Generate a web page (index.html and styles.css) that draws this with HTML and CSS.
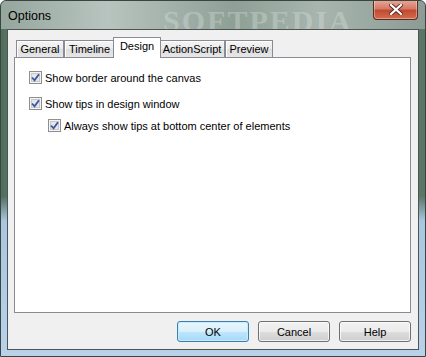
FILE: index.html
```html
<!DOCTYPE html>
<html lang="en">
<head>
  <meta charset="UTF-8">
  <meta name="viewport" content="width=device-width, initial-scale=1.0">
  <title>Options</title>
  <link rel="stylesheet" href="styles.css">
</head>
<body>
  <div class="window">
    <!-- title bar -->
    <div class="titlebar">
      <span class="title">Options</span>
      <span class="watermark">SOFTPEDIA</span>
      <div class="close">
        <svg width="14" height="11" viewBox="0 0 14 11">
          <path d="M2 1 L12 10 M12 1 L2 10" stroke="#5a2a22" stroke-width="4" stroke-linecap="square"/>
          <path d="M2 1 L12 10 M12 1 L2 10" stroke="#ffffff" stroke-width="2.2" stroke-linecap="square"/>
        </svg>
      </div>
    </div>

    <div class="client">
      <!-- tabs -->
      <div class="tabs">
        <div class="tab t_general">General</div>
        <div class="tab t_timeline">Timeline</div>
        <div class="tab active t_design">Design</div>
        <div class="tab t_action">ActionScript</div>
        <div class="tab t_preview">Preview</div>
      </div>

      <div class="panel">
        <div class="row">
          <svg class="chk" width="13" height="13" viewBox="0 0 13 13">
            <rect x="0.5" y="0.5" width="12" height="12" fill="#f4f4f4" stroke="#8e8f8f"/>
            <rect x="2.5" y="2.5" width="8" height="8" fill="#e6e6e6" stroke="#c9c9c9"/>
            <path d="M3 6.5 L5.5 9.3 L10 3.2" fill="none" stroke="#3b56a3" stroke-width="1.8"/>
          </svg>
          <span>Show border around the canvas</span>
        </div>
        <div class="row">
          <svg class="chk" width="13" height="13" viewBox="0 0 13 13">
            <rect x="0.5" y="0.5" width="12" height="12" fill="#f4f4f4" stroke="#8e8f8f"/>
            <rect x="2.5" y="2.5" width="8" height="8" fill="#e6e6e6" stroke="#c9c9c9"/>
            <path d="M3 6.5 L5.5 9.3 L10 3.2" fill="none" stroke="#3b56a3" stroke-width="1.8"/>
          </svg>
          <span>Show tips in design window</span>
        </div>
        <div class="row sub">
          <svg class="chk" width="13" height="13" viewBox="0 0 13 13">
            <rect x="0.5" y="0.5" width="12" height="12" fill="#f4f4f4" stroke="#8e8f8f"/>
            <rect x="2.5" y="2.5" width="8" height="8" fill="#e6e6e6" stroke="#c9c9c9"/>
            <path d="M3 6.5 L5.5 9.3 L10 3.2" fill="none" stroke="#3b56a3" stroke-width="1.8"/>
          </svg>
          <span>Always show tips at bottom center of elements</span>
        </div>
      </div>

      <!-- dialog buttons -->
      <div class="buttons">
        <div class="btn default">OK</div>
        <div class="btn">Cancel</div>
        <div class="btn">Help</div>
      </div>
    </div>
  </div>
</body>
</html>
```

FILE: styles.css
```css
* {
  box-sizing: border-box;
  margin: 0;
}
body {
  width: 426px;
  height: 357px;
  overflow: hidden;
  font-family: "Liberation Sans", Arial, sans-serif;
  font-size: 11px;
  color: #000;
}

.window {
  width: 426px;
  height: 357px;
  display: flex;
  flex-direction: column;
  border: 1px solid #3a4540;
  border-radius: 6px 6px 0 0;
  background:
    linear-gradient(180deg, rgba(150,170,160,0) 0%, rgba(150,170,160,0) 55%, #a9c6e0 62%, #b8d2ea 100%),
    linear-gradient(90deg, #4f6d5d 0%, #9fb0a8 20%, #8a9f95 45%, #b2c0ba 65%, #718a7e 85%, #587565 100%);
  overflow: hidden;
}

.titlebar {
  height: 28px;
  display: flex;
  align-items: flex-start;
  padding-left: 7px;
  background: linear-gradient(90deg, #95a69e 0%, #b8c4bf 25%, #8ea096 55%, #a7b5ae 75%, #8c9c94 100%);
}
.title {
  padding-top: 8px;
  font-size: 12.5px;
  color: #000;
}
.watermark {
  flex: 1;
  padding: 3px 0 0 112px;
  font-family: "Liberation Serif", serif;
  font-weight: bold;
  font-size: 30px;
  letter-spacing: 2px;
  color: rgba(235, 240, 238, 0.28);
  white-space: nowrap;
  overflow: hidden;
}
.close {
  width: 45px;
  height: 20px;
  margin-right: 7px;
  margin-top: -1px;
  display: flex;
  align-items: center;
  justify-content: center;
  border: 1px solid #5b2a22;
  border-top: none;
  border-radius: 0 0 4px 4px;
  background: linear-gradient(180deg, #e9a99a 0%, #d77a67 45%, #c04a32 55%, #d46c4c 100%);
  box-shadow: inset 0 0 0 1px rgba(255,255,255,0.35);
}

.client {
  flex: 1;
  margin: 0 6px 6px 6px;
  display: flex;
  flex-direction: column;
  background: #f0f0f0;
  border: 1px solid #4c5554;
}

.tabs {
  display: flex;
  align-items: flex-end;
  height: 27px;
  padding-left: 8px;
}
.tab {
  height: 17px;
  padding-top: 2px;
  text-align: center;
  border: 1px solid #898c95;
  border-bottom: none;
  background: linear-gradient(180deg, #f4f4f4 0%, #ebebeb 50%, #dedede 51%, #e6e6e6 100%);
  box-shadow: inset 1px 1px 0 #fff;
}
.t_general { width: 48px; }
.t_timeline { width: 51px; }
.t_design { width: 48px; }
.t_action { width: 66px; }
.t_preview { width: 48px; }
.tab.active {
  height: 21px;
  margin: 0 -2px -1px -2px;
  padding-top: 2px;
  background: #fff;
  box-shadow: none;
  position: relative;
  z-index: 1;
}

.panel {
  flex: 1;
  margin: 0 7px 0 6px;
  background: #fff;
  border: 1px solid #898c95;
  padding: 13px 0 0 14px;
}
.row {
  display: flex;
  align-items: center;
  height: 13px;
  margin-bottom: 13px;
  white-space: nowrap;
}
.row.sub {
  margin-top: -4px;
  padding-left: 19px;
}
.chk {
  flex: none;
  margin-right: 3px;
}

.buttons {
  display: flex;
  justify-content: flex-end;
  gap: 9px;
  padding: 8px 7px 7px 0;
}
.btn {
  width: 72px;
  height: 21px;
  display: flex;
  align-items: center;
  justify-content: center;
  border: 1px solid #707070;
  border-radius: 3px;
  background: linear-gradient(180deg, #f2f2f2 0%, #ebebeb 50%, #dddddd 51%, #cfcfcf 100%);
  box-shadow: inset 0 0 0 1px rgba(255,255,255,0.7);
}
.btn.default {
  border-color: #3c7fb1;
  background: linear-gradient(180deg, #eaf6fd 0%, #d9f0fc 50%, #bee6fd 51%, #a7d9f5 100%);
  box-shadow: inset 0 0 0 1px #c7ecfd;
}
```
